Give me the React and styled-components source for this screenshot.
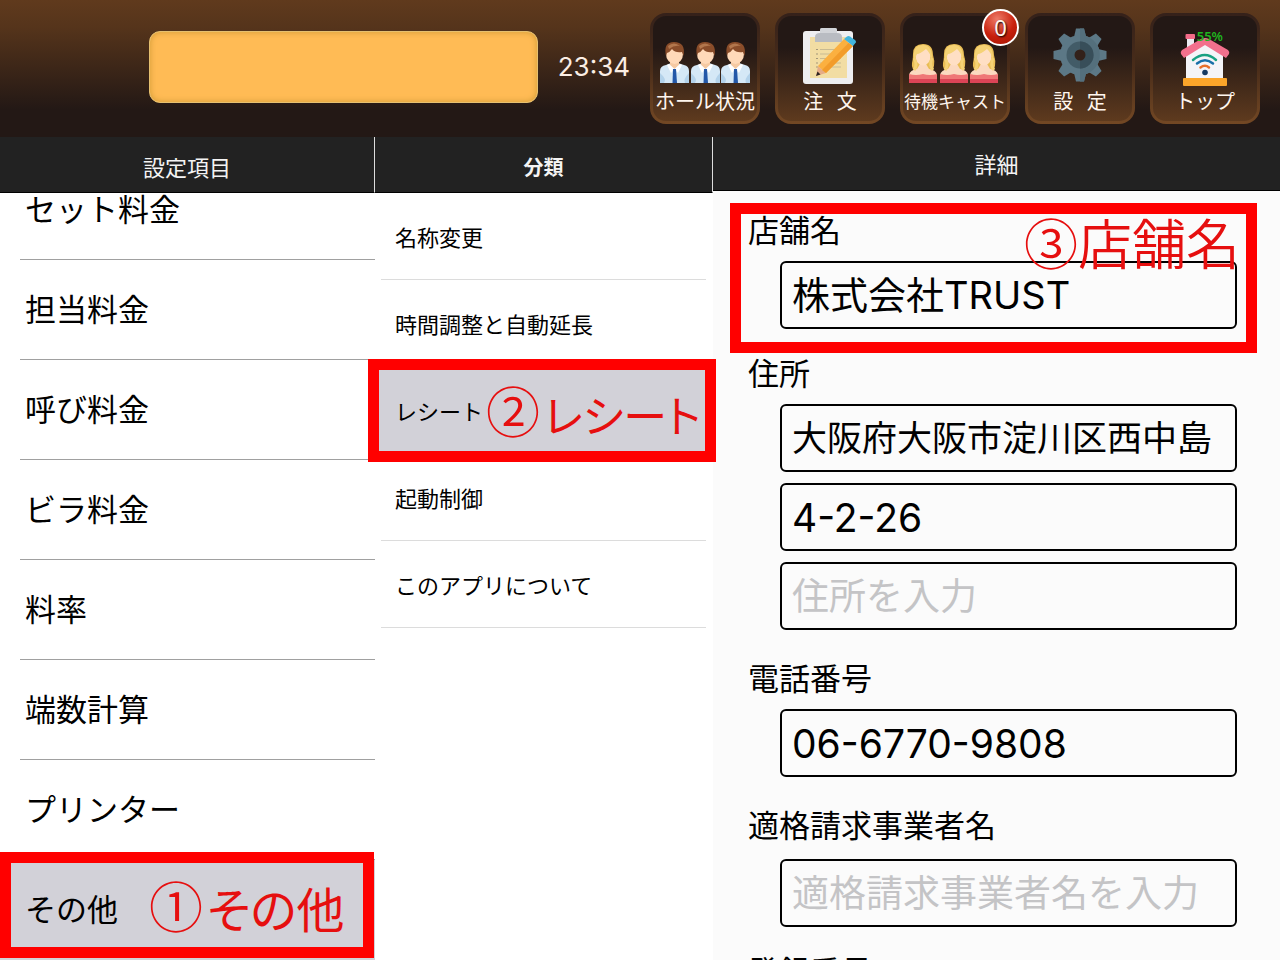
import React from 'react'
import styled, { createGlobalStyle, css } from 'styled-components'

const GlobalStyle = createGlobalStyle`
* { box-sizing: border-box; }
body {
  margin: 0;
  background: #ffffff;
  color: #000000;
  font-family: 'Noto Sans CJK JP', sans-serif;
}
button, input {
  font-family: inherit;
  color: inherit;
  margin: 0;
}
`

const Page = styled.div`
display: flex;
flex-direction: column;
height: 100vh;
overflow: hidden;
`

const Header = styled.header`
display: flex;
align-items: center;
gap: 20px;
padding: 13px 20px 13px 149px;
background: linear-gradient(#603a1d 0%, #55341b 20%, #231815 80%);
`

const NoticeBar = styled.div`
flex: 1;
height: 72px;
margin-bottom: 3px;
border-radius: 11px;
background: #ffbb55;
border: 1px solid #e6c070;
box-shadow: inset 0 0 6px #cf9a35;
`

const Clock = styled.time`
font-family: Inter, sans-serif;
font-size: 26px;
line-height: 32px;
color: #fbeee4;
margin-bottom: 3px;
`

const Menu = styled.nav`
display: flex;
gap: 15px;
`

const MenuButton = styled.button`
position: relative;
display: flex;
flex-direction: column;
align-items: center;
justify-content: flex-end;
width: 110px;
height: 111px;
padding: 0 0 6px;
border: 3px solid transparent;
border-radius: 16px;
background:
  linear-gradient(#231815 0%, #231815 30%, #5e3a1e 100%) padding-box,
  linear-gradient(#35211a 0%, #4a2d1a 50%, #734824 100%) border-box;
color: #fff6ee;
`

const MenuLabel = styled.span`
font-size: ${props => props.$small ? 17 : 20}px;
line-height: 28px;
white-space: pre;
`

const MenuIcon = styled.svg`
width: 100px;
height: 60px;
flex: none;
`

const Badge = styled.span`
position: absolute;
top: -7px;
right: -12px;
width: 37px;
height: 37px;
border: 2px solid #ffffff;
border-radius: 50%;
background: radial-gradient(circle at 40% 25%, #ee7b68, #c8200c 55%, #a01404);
font-family: 'Noto Sans', sans-serif;
font-size: 22px;
line-height: 32px;
text-align: center;
text-shadow: 1px 1px 2px #000000;
`

const Battery = styled.span`
position: absolute;
top: 12px;
right: 34px;
font-family: 'Noto Sans', sans-serif;
font-size: 13px;
font-weight: 600;
line-height: 16px;
color: #1fb41f;
`

const Columns = styled.main`
flex: 1;
min-height: 0;
display: grid;
grid-template-columns: 375fr 338fr 567fr;
`

const Column = styled.section`
display: flex;
flex-direction: column;
min-width: 0;
min-height: 0;
background: ${props => props.$tint ? '#fbfbfb' : '#ffffff'};
`

const ColumnTitle = styled.h2`
flex: none;
margin: 0;
height: ${props => props.$short ? 54 : 56}px;
padding-top: ${props => props.$short ? 0 : 3}px;
border-right: ${props => props.$last ? 'none' : '1px solid #dddddd'};
border-bottom: 1px solid #000000;
background: #222222;
color: #f4f4f4;
font-size: ${props => props.$bold ? 20 : 22}px;
font-weight: ${props => props.$bold ? 700 : 400};
line-height: 53px;
text-align: center;
`

/* scrolled to its end, so the first row is cut by the title */
const ItemList = styled.div`
flex: 1;
min-height: 0;
display: flex;
flex-direction: column;
justify-content: flex-end;
overflow: hidden;
`

const selected = css`
background: #d2d1d8;
&::after { display: none; }
`

const Item = styled.button`
position: relative;
flex: none;
height: 100px;
padding: 0 0 5px 25px;
border: none;
background: none;
font-size: 31px;
line-height: 32px;
text-align: left;
&::after {
  content: '';
  position: absolute;
  left: 20px;
  right: 0;
  bottom: 0;
  height: 1px;
  background: #a0a0a0;
}
${props => props.$selected && selected}
`

const SubItem = styled(Item)`
height: 87px;
padding-bottom: 2px;
padding-left: 20px;
font-size: 22px;
&::after {
  left: 6px;
  right: 7px;
  background: #dcdcdc;
}
${props => props.$selected && selected}
`

const Mark = styled.span`
position: absolute;
z-index: 2;
pointer-events: none;
border: 11px solid #ff0000;
color: #e60f0f;
font-size: 54px;
font-weight: 350;
line-height: 80px;
font-feature-settings: 'palt';
white-space: nowrap;
`

const ItemMark = styled(Mark)`
inset: -8px 1px 2px 0;
padding-left: 138px;
line-height: 84px;
`

const SubItemMark = styled(Mark)`
inset: -8px -3px -8px -7px;
padding-left: 107px;
`

const MarkName = styled.span`
margin-left: 4px;
font-size: ${props => props.$small ? 44 : 48}px;
font-weight: 400;
`

const FieldMark = styled(Mark)`
inset: -4px -20px -24px -18px;
padding-right: 6px;
line-height: 56px;
text-align: right;
`

const Form = styled.form`
display: flex;
flex-direction: column;
padding: 16px 43px 0 35px;
overflow: hidden;
`

const Field = styled.div`
position: relative;
flex: none;
display: flex;
flex-direction: column;
gap: 11px;
padding-left: 32px;
margin-bottom: ${props => props.$space || 25}px;
`

const FieldLabel = styled.label`
margin: 0 0 ${props => props.$loose ? 2 : -1}px -32px;
font-size: 31px;
line-height: 44px;
`

const TextBox = styled.input`
width: 100%;
height: 68px;
padding: 0 10px ${props => props.$kanji ? 5 : 0}px;
border: 2px solid #000000;
border-radius: 6px;
background: transparent;
font-family: Inter, 'Noto Sans CJK JP', sans-serif;
font-size: ${props => props.$size || 37}px;
&::placeholder {
  color: #c4c4c6;
  opacity: 1;
}
`

const Man = ({ x }) => (
  <g transform={`translate(${x} 0)`}>
    <path d="M5 56V44Q5 39 11 38L16 36H23L29 38Q34 39 34 44V56Z" fill="#d5e8f6" />
    <path d="M5 56V46Q12 52 9 56ZM34 56V46Q28 52 30 56Z" fill="#b3d2ea" />
    <path d="M15 33H24V38L19.500 43L15 38Z" fill="#f5c9a2" />
    <path d="M14 37L19.500 42L16 46L12 38ZM25 37L19.500 42L23 46L27 38Z" fill="#ffffff" />
    <path d="M18 42H21L22 56H17.500Z" fill="#2458a8" />
    <ellipse cx="19.500" cy="27" rx="8.500" ry="10" fill="#ffd9b8" />
    <path d="M11 29Q8 15 19 15Q31 15 28.500 29L27 25Q20 26 17 22Q15 25 12 26Z" fill="#8a4d2a" />
    <path d="M13 19Q19 14 25 19Q19 18 14 22Z" fill="#b2774d" />
  </g>
)

const Woman = ({ x }) => (
  <g transform={`translate(${x} 0)`}>
    <path d="M18 17Q28 17 28 28Q30 34 29 39Q28 44 22 44H12Q6 43 7 36Q8 33 8 27Q8 17 18 17Z" fill="#e9bd55" />
    <path d="M4 56V48Q5 43 12 42L15 37H21L24 42Q31 43 32 48V56Z" fill="#fbd9c0" />
    <path d="M4 56V47Q11 49 18 47Q25 49 32 47V56Z" fill="#ef7777" />
    <path d="M4 52H32V56H4Z" fill="#dc4456" />
    <ellipse cx="18" cy="29" rx="7.500" ry="9.500" fill="#ffdfc4" />
    <path d="M9 33Q7 18 18 18Q28 18 27 34Q25 25 21 22Q15 27 12 27Q11 29 9 33Z" fill="#f5d275" />
    <path d="M9 31Q13 38 9 43M27 31Q24 38 28 43" fill="none" stroke="#f5d275" strokeWidth="3" />
  </g>
)

const PeopleIcon = () => (
  <MenuIcon viewBox="0 0 100 60"><Man x={0} /><Man x={31} /><Man x={61} /></MenuIcon>
)

const CastIcon = () => (
  <MenuIcon viewBox="0 0 100 60"><Woman x={0} /><Woman x={31} /><Woman x={61} /></MenuIcon>
)

const OrderIcon = () => (
  <MenuIcon viewBox="0 0 100 60">
    <rect x="23" y="4" width="50" height="53" rx="3" fill="#eeeef0" />
    <rect x="30" y="10" width="37" height="41" fill="#f2dda3" />
    <path d="M35 15V10Q35 6 40 6V3Q40 1 42 1H55Q57 1 57 3V6Q62 6 62 10V15Z" fill="#b9bcc2" />
    <path d="M40 6V3Q40 1 42 1H55Q57 1 57 3V6Z" fill="#d2d4d8" />
    <path d="M40 22.500H61M40 27H61M40 31.500H61M40 36H61M40 40H61" stroke="#c9bb92" strokeWidth="1" />
    <path d="M36 22.500H38M36 27H38M36 31.500H38M36 36H38M36 40H38" stroke="#a3977a" strokeWidth="1" />
    <path d="M36 49L38 39L46 46Z" fill="#e5ac87" />
    <path d="M36 49L37.500 44.500L40.500 47.500Z" fill="#2d2522" />
    <path d="M38 39L64 12L73 19L46 46Z" fill="#fbb040" />
    <path d="M42 43L68.500 16L73 19L46 46Z" fill="#f29c2b" />
    <path d="M64 12L67 9.500Q69 8 72 11L75 13Q77 15 75 16.500L73 19Z" fill="#42b4dc" />
  </MenuIcon>
)

const teeth = [0, 45, 90, 135, 180, 225, 270, 315]

const GearIcon = () => (
  <MenuIcon viewBox="0 0 100 60">
    <g transform="translate(50 28)">
      <circle r="20" fill="#5c7886" />
      {teeth.map(deg => (
        <path key={deg} d="M-6 -18L-4 -26.500H4L6 -18Z" fill="#5c7886" transform={`rotate(${deg})`} />
      ))}
      <path d="M0 -26.500H4L6 -19A20 20 0 0 1 6 19L4 26.500H0Z" fill="#546f7c" />
      <circle r="13.500" fill="#425b67" />
      <path d="M0 -13.500A13.500 13.500 0 0 1 0 13.500Z" fill="#384e59" />
      <circle r="5.500" fill="#33211a" />
    </g>
  </MenuIcon>
)

const HomeIcon = () => (
  <MenuIcon viewBox="0 0 100 60">
    <rect x="32" y="9" width="7" height="16" fill="#ececf2" />
    <rect x="30.500" y="7" width="9.500" height="5" rx="1" fill="#f26a88" />
    <path d="M31 28L50 17L68 28V52H31Z" fill="#f4f4f8" />
    <path d="M29 31L50 18L71 31L74 27Q75 25 73 23L54 12Q50 10 46 12L27 23Q25 25 26 27Z" fill="#f2708d" />
    <rect x="28" y="51" width="44" height="8" rx="1" fill="#fba52a" />
    <g fill="none" strokeWidth="2.500" strokeLinecap="round">
      <path d="M38 33Q50 23 61 33" stroke="#18a082" />
      <path d="M42 36.500Q50 30 58 36.500" stroke="#176fa8" />
      <path d="M45.500 40.500Q50 37 54 40.500" stroke="#e7702b" />
    </g>
    <circle cx="50" cy="45.500" r="2.800" fill="#163a63" />
  </MenuIcon>
)

const items = ['セット料金', '担当料金', '呼び料金', 'ビラ料金', '料率', '端数計算', 'プリンター', 'その他']
const subItems = ['名称変更', '時間調整と自動延長', 'レシート', '起動制御', 'このアプリについて']

function TopBar () {
  return (
    <Header>
      <NoticeBar />
      <Clock>23:34</Clock>
      <Menu>
        <MenuButton type="button"><PeopleIcon /><MenuLabel>ホール状況</MenuLabel></MenuButton>
        <MenuButton type="button"><OrderIcon /><MenuLabel>注   文</MenuLabel></MenuButton>
        <MenuButton type="button"><CastIcon /><MenuLabel $small>待機キャスト</MenuLabel><Badge>0</Badge></MenuButton>
        <MenuButton type="button"><GearIcon /><MenuLabel>設   定</MenuLabel></MenuButton>
        <MenuButton type="button"><HomeIcon /><MenuLabel>トップ</MenuLabel><Battery>55%</Battery></MenuButton>
      </Menu>
    </Header>
  )
}

function ShopForm () {
  return (
    <Form>
      <Field $space={21}>
        <FieldLabel htmlFor="shop">店舗名</FieldLabel>
        <TextBox id="shop" $kanji $size={38} defaultValue="株式会社TRUST" />
        <FieldMark>③店舗名</FieldMark>
      </Field>
      <Field>
        <FieldLabel htmlFor="address">住所</FieldLabel>
        <TextBox id="address" $kanji $size={35} defaultValue="大阪府大阪市淀川区西中島" />
        <TextBox aria-label="住所2" defaultValue="4-2-26" $size={39} />
        <TextBox aria-label="住所3" placeholder="住所を入力" />
      </Field>
      <Field>
        <FieldLabel htmlFor="tel">電話番号</FieldLabel>
        <TextBox id="tel" type="tel" $size={39} defaultValue="06-6770-9808" />
      </Field>
      <Field $space={21}>
        <FieldLabel $loose htmlFor="issuer">適格請求事業者名</FieldLabel>
        <TextBox id="issuer" placeholder="適格請求事業者名を入力" />
      </Field>
      <Field>
        <FieldLabel htmlFor="number">登録番号</FieldLabel>
        <TextBox id="number" />
      </Field>
    </Form>
  )
}

function App () {
  return (
    <Page>
      <GlobalStyle />
      <TopBar />
      <Columns>
        <Column>
          <ColumnTitle>設定項目</ColumnTitle>
          <ItemList>
            {items.map(name => (
              <Item type="button" key={name} $selected={name === 'その他'}>
                {name}
                {name === 'その他' && <ItemMark>①<MarkName>その他</MarkName></ItemMark>}
              </Item>
            ))}
          </ItemList>
        </Column>
        <Column>
          <ColumnTitle $bold>分類</ColumnTitle>
          {subItems.map(name => (
            <SubItem type="button" key={name} $selected={name === 'レシート'}>
              {name}
              {name === 'レシート' && <SubItemMark>②<MarkName $small>レシート</MarkName></SubItemMark>}
            </SubItem>
          ))}
        </Column>
        <Column $tint>
          <ColumnTitle $short $last>詳細</ColumnTitle>
          <ShopForm />
        </Column>
      </Columns>
    </Page>
  )
}
export default App
